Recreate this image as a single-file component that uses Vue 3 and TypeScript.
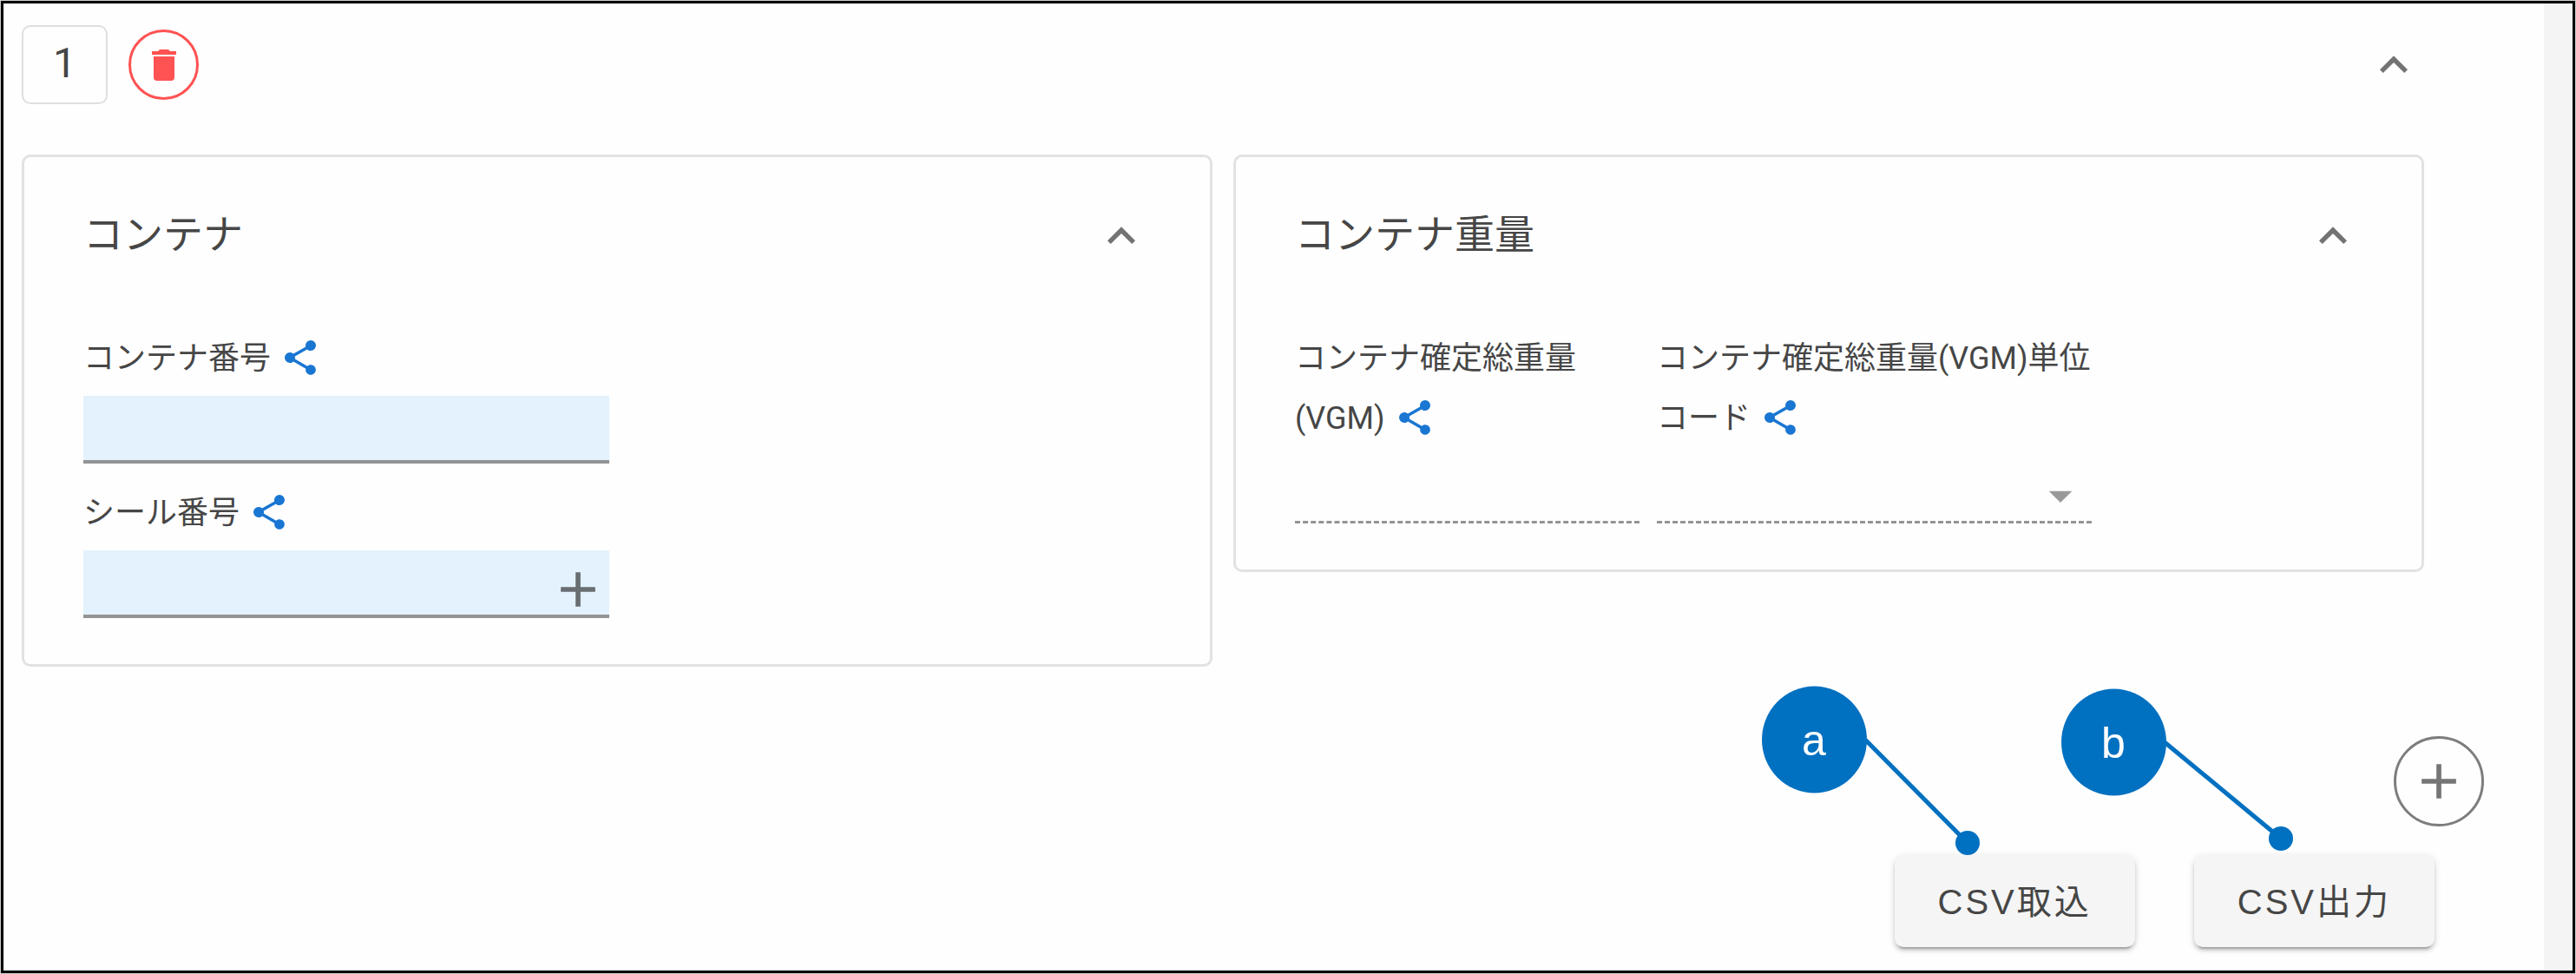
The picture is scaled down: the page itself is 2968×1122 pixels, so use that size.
<script setup lang="ts">
import { ref } from 'vue'

interface Field {
  id: string
  label: string
  kind: 'text' | 'select'
  span: number
  filled: boolean
  addable?: boolean
}

interface Card {
  title: string
  fields: Field[]
}

interface CsvAction {
  label: string
  mark: string
  cy: number
  dotX: number
  dotY: number
}

const icons = {
  up: 'M7.41,15.41L12,10.83L16.59,15.41L18,14L12,8L6,14L7.41,15.41Z',
  trash: 'M19,4H15.5L14.5,3H9.5L8.5,4H5V6H19M6,19A2,2 0 0,0 8,21H16A2,2 0 0,0 18,19V7H6V19Z',
  plus: 'M19,13H13V19H11V13H5V11H11V5H13V11H19V13Z',
  down: 'M7,10L12,15L17,10H7Z',
  share:
    'M18,16.08C17.24,16.08 16.56,16.38 16.04,16.85L8.91,12.7C8.96,12.47 9,12.24 9,12C9,11.76 8.96,11.53 8.91,11.3L15.96,7.19C16.5,7.69 17.21,8 18,8A3,3 0 0,0 21,5A3,3 0 0,0 18,2A3,3 0 0,0 15,5C15,5.24 15.04,5.47 15.09,5.7L8.04,9.81C7.5,9.31 6.79,9 6,9A3,3 0 0,0 3,12A3,3 0 0,0 6,15C6.79,15 7.5,14.69 8.04,14.19L15.16,18.34C15.11,18.55 15.08,18.77 15.08,19C15.08,20.61 16.39,21.91 18,21.91C19.61,21.91 20.92,20.61 20.92,19A2.92,2.92 0 0,0 18,16.08Z',
}

const cards: Card[] = [
  {
    title: 'コンテナ',
    fields: [
      { id: 'container-no', label: 'コンテナ番号', kind: 'text', span: 6, filled: true },
      { id: 'seal-no', label: 'シール番号', kind: 'text', span: 6, filled: true, addable: true },
    ],
  },
  {
    title: 'コンテナ重量',
    fields: [
      { id: 'vgm', label: 'コンテナ確定総重量(VGM)', kind: 'text', span: 4, filled: false },
      { id: 'vgm-unit', label: 'コンテナ確定総重量(VGM)単位コード', kind: 'select', span: 5, filled: false },
    ],
  },
]

const actions: CsvAction[] = [
  { label: 'CSV取込', mark: 'a', cy: 64, dotX: 237, dotY: 183 },
  { label: 'CSV出力', mark: 'b', cy: 67, dotX: 253, dotY: 178 },
]

const values = ref<Record<string, string>>({})
</script>

<template>
  <div class="edge">
    <div class="frame">
      <main class="panel">
        <section class="entry">
          <header class="entry-head">
            <div class="number">1</div>
            <button class="round delete" type="button" aria-label="削除">
              <svg class="icon-s" viewBox="0 0 24 24"><path :d="icons.trash" /></svg>
            </button>
            <button class="toggle" type="button" aria-label="折りたたむ">
              <svg class="icon-m" viewBox="0 0 24 24"><path :d="icons.up" /></svg>
            </button>
          </header>

          <div class="cards">
            <section v-for="card in cards" :key="card.title" class="card">
              <header class="card-head">
                <h2>{{ card.title }}</h2>
                <button class="toggle" type="button" aria-label="折りたたむ">
                  <svg class="icon-m" viewBox="0 0 24 24"><path :d="icons.up" /></svg>
                </button>
              </header>
              <div class="fields" :class="{ stacked: card.fields[0].filled }">
                <div v-for="f in card.fields" :key="f.id" class="field" :class="'span-' + f.span">
                  <label :for="f.id">{{ f.label }}<svg class="icon-s share" viewBox="0 0 24 24"><path :d="icons.share" /></svg></label>
                  <div class="control" :class="f.filled ? 'filled' : 'dashed'">
                    <select v-if="f.kind === 'select'" :id="f.id" disabled>
                      <option value=""></option>
                    </select>
                    <input v-else :id="f.id" v-model="values[f.id]" type="text" :disabled="!f.filled" />
                    <svg v-if="f.kind === 'select'" class="icon-m caret" viewBox="0 0 24 24"><path :d="icons.down" /></svg>
                    <button v-if="f.addable" class="add-inline" type="button" aria-label="追加">
                      <svg class="icon-l" viewBox="0 0 24 24"><path :d="icons.plus" /></svg>
                    </button>
                  </div>
                </div>
              </div>
            </section>
          </div>
        </section>

        <div class="add-row">
          <button class="round add" type="button" aria-label="行を追加">
            <svg class="icon-l" viewBox="0 0 24 24"><path :d="icons.plus" /></svg>
          </button>
        </div>

        <footer class="actions">
          <div v-for="a in actions" :key="a.mark" class="action">
            <button class="csv" type="button">{{ a.label }}</button>
            <svg class="callout" width="280" height="200" viewBox="0 0 280 200">
              <line x1="119" :y1="a.cy" :x2="a.dotX" :y2="a.dotY" />
              <ellipse cx="60.5" :cy="a.cy" rx="60.5" ry="61.5" />
              <circle :cx="a.dotX" :cy="a.dotY" r="14" />
              <text x="60" :y="a.cy + 18">{{ a.mark }}</text>
            </svg>
          </div>
        </footer>
      </main>
      <div class="gutter"></div>
    </div>
  </div>
</template>

<style>
body {
  margin: 0;
}
</style>

<style scoped>
* {
  box-sizing: border-box;
}

.edge {
  display: flex;
  min-height: 100vh;
  padding: 1px;
  background: #cbcfcb;
  color: #464646;
  font-family: Roboto, 'Noto Sans CJK JP', sans-serif;
}

.frame {
  display: flex;
  flex: 1;
  border: 3px solid #000;
  background: #fefefe;
}

.panel {
  flex: 1;
  min-width: 0;
  padding: 25px 69px 26px 21px;
}

.gutter {
  width: 33px;
  background: #f4f4f4;
}

button {
  padding: 0;
  border: 0;
  background: none;
  color: inherit;
  font-family: inherit;
}

svg {
  display: block;
  flex: none;
  fill: currentColor;
}

.icon-s {
  width: 48px;
  height: 48px;
}

.icon-m {
  width: 64px;
  height: 64px;
}

.icon-l {
  width: 68px;
  height: 68px;
}

.entry {
  margin-right: 69px;
}

.entry-head {
  display: flex;
  align-items: center;
  gap: 24px;
}

.number {
  display: flex;
  align-items: center;
  justify-content: center;
  width: 99px;
  height: 91px;
  padding-bottom: 4px;
  border: 2px solid #dfdfdf;
  border-radius: 10px;
  font-size: 48px;
}

.round {
  display: flex;
  align-items: center;
  justify-content: center;
  border-radius: 50%;
}

.delete {
  width: 81px;
  height: 81px;
  border: 3px solid #ff5252;
  color: #ff5252;
}

.toggle {
  display: flex;
  align-items: center;
  justify-content: center;
  width: 70px;
  height: 70px;
  margin-left: auto;
  color: #737373;
}

.cards {
  display: grid;
  grid-template-columns: 1fr 1fr;
  align-items: start;
  gap: 24px;
  margin-top: 58px;
}

.card {
  padding: 56px 67px 53px 68px;
  border: 3px solid #e2e2e2;
  border-radius: 10px;
}

.card-head {
  display: flex;
  align-items: center;
}

h2 {
  margin: 0;
  padding-bottom: 4px;
  font-size: 46px;
  font-weight: 400;
  line-height: 64px;
}

.fields {
  display: grid;
  grid-template-columns: repeat(12, 1fr);
  column-gap: 20px;
  row-gap: 21px;
  margin-top: 70px;
}

.stacked .field {
  grid-column-start: 1;
}

.span-4 {
  grid-column-end: span 4;
}

.span-5 {
  grid-column-end: span 5;
}

.span-6 {
  grid-column-end: span 6;
}

label {
  display: block;
  padding-top: 2px;
  font-size: 36px;
  line-height: 69px;
}

.share {
  display: inline-block;
  margin: -6px 0 0 10px;
  vertical-align: middle;
  color: #1976d2;
}

.control {
  display: flex;
  align-items: center;
  height: 78px;
  margin-top: 8px;
  padding-top: 16px;
}

.filled {
  border-bottom: 4px solid #949494;
  background: #e3f2fd;
}

.dashed {
  border-bottom: 3px dashed #949494;
}

input,
select {
  flex: 1;
  min-width: 0;
  height: 100%;
  padding: 0;
  border: 0;
  outline: 0;
  appearance: none;
  background: none;
  color: inherit;
  font-family: inherit;
  font-size: 36px;
}

.caret {
  margin-right: 4px;
  color: #999;
}

.add-inline {
  margin-right: 2px;
  color: #686e72;
}

.add-row {
  display: flex;
  justify-content: flex-end;
  margin-top: 80px;
}

.add {
  width: 104px;
  height: 104px;
  border: 3px solid #7d7d7d;
  color: #757575;
}

.actions {
  display: flex;
  justify-content: flex-end;
  gap: 68px;
  margin-top: 33px;
  padding-right: 57px;
}

.action {
  position: relative;
}

.csv {
  height: 106px;
  padding: 0 50px 4px;
  border-radius: 10px;
  background: #f5f5f5;
  box-shadow:
    0 6px 2px -4px rgba(0, 0, 0, 0.2),
    0 4px 4px rgba(0, 0, 0, 0.14),
    0 2px 10px rgba(0, 0, 0, 0.12);
  font-family: 'Liberation Sans', 'Noto Sans CJK JP', sans-serif;
  font-size: 40px;
  letter-spacing: 3px;
}

.callout {
  position: absolute;
  top: -197px;
  left: -153px;
  fill: #0070c0;
  pointer-events: none;
}

.callout line {
  stroke: #0070c0;
  stroke-width: 5px;
}

.callout text {
  fill: #fff;
  font-family: 'Liberation Sans', sans-serif;
  font-size: 50px;
  text-anchor: middle;
}
</style>
